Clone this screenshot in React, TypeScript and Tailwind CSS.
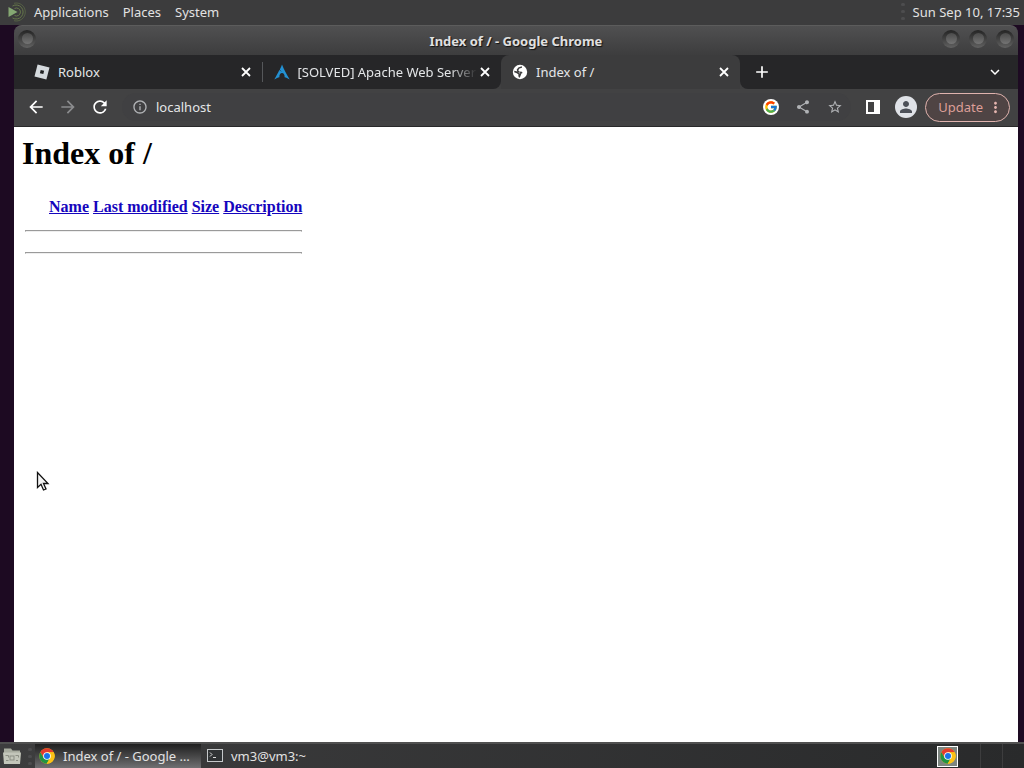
import { FC, ReactNode } from "react";
import clsx from "clsx";
import {
  MdArrowBack,
  MdArrowForward,
  MdInfoOutline,
  MdKeyboardArrowDown,
  MdAdd,
  MdMoreVert,
  MdPerson,
  MdRefresh,
  MdShare,
  MdStarBorder,
} from "react-icons/md";
import { FcGoogle } from "react-icons/fc";

const ChromeLogo: FC<{ className?: string }> = ({ className }) => (
  <svg viewBox="0 0 48 48" className={className} aria-hidden="true">
    <circle cx="24" cy="24" r="23" fill="#fbc116" />
    <path d="M4 12.600A23 23 0 0 1 44 12.600L24 13.500 14.500 29.500Z" fill="#e33b2e" />
    <path d="M4.100 12.500A23 23 0 0 0 23 47L33.500 29.500H14Z" fill="#229342" />
    <path d="M44 12.500H24L33.500 29.500 23 47A23 23 0 0 0 44 12.500Z" fill="#fbc116" />
    <circle cx="24" cy="24" r="11.500" fill="#fff" />
    <circle cx="24" cy="24" r="9" fill="#1a73e8" />
  </svg>
);

const RobloxLogo: FC = () => (
  <svg viewBox="0 0 16 16" className="size-4 shrink-0" aria-hidden="true">
    <path d="M3.600.500 15.500 3.600 12.400 15.500.500 12.400Z" fill="#d5dade" />
    <path d="M6.700 5.900 10.100 6.700 9.300 10.100 5.900 9.300Z" fill="#1f2022" />
  </svg>
);

const ArchLogo: FC = () => (
  <svg viewBox="0 0 16 16" className="size-4 shrink-0" aria-hidden="true">
    <path
      d="M8 .5C7.200 2.500 6.700 3.800 5.800 5.700c.6.6 1.300 1.300 2.400 2C7 7.200 6 6.600 5.300 6 4 8.800 2.600 11.700.3 15.500c2-1.200 3.600-1.900 5.100-2.200C5.200 10.800 6.300 9 8 9s2.800 1.800 2.600 4.300c1.500.3 3.100 1 5.100 2.200C12.300 9.700 10 5.500 8 .5Z"
      fill="#2391d3"
    />
  </svg>
);

const GlobeIcon: FC = () => (
  <svg viewBox="0 0 16 16" className="size-4 shrink-0" aria-hidden="true">
    <circle cx="8" cy="8" r="7.200" fill="#fff" />
    <path
      d="M9.800 2.300 10 3.800 7.400 4.600 6.300 6.300 7.200 7.400 9.900 7.700 10.600 9 9.400 9.600 8.300 12.600 7.200 14 6.300 11.900 6.500 10.600 4.800 9.300 2.200 8.300 2.400 6.800 5.500 7.600 7.600 9.500 8.500 8.900 5.400 7.700 4.700 5.700 6.300 3.600Z"
      fill="#3c3c3d"
    />
    <path d="M10.500 3.300 13 5.500 11.500 6.500 9.500 5.700Z" fill="#fff" />
  </svg>
);

const CloseIcon: FC = () => (
  <svg viewBox="0 0 16 16" className="size-4" aria-hidden="true">
    <path d="M4 4 12 12M12 4 4 12" fill="none" stroke="currentColor" strokeWidth="1.800" />
  </svg>
);

const MenuLogo: FC = () => (
  <svg viewBox="0 0 20 20" className="h-5 w-5 shrink-0" aria-hidden="true">
    <g fill="none" stroke="#66784a" strokeWidth="1">
      <path d="M7.500 6.500A4 4 0 1 1 7.500 13.500" />
      <path d="M5.500 4A7 7 0 1 1 5.500 16" />
      <path d="M7 1.300A9 9 0 1 1 7 18.700" opacity=".6" />
    </g>
    <path d="M1.500 5 10.500 10 1.500 15Z" fill="#85a873" />
  </svg>
);

const TitleButton: FC<{ label: string }> = ({ label }) => (
  <button
    type="button"
    aria-label={label}
    className="flex size-[18px] items-center justify-center rounded-full bg-linear-to-b from-[#242424] to-[#626262]"
  >
    <span className="size-[11px] rounded-full bg-linear-to-b from-[#4b4b4b] to-[#747474]" />
  </button>
);

const Grip: FC = () => (
  <span className="flex w-1 shrink-0 flex-col gap-1" aria-hidden="true">
    <span className="h-[3px] rounded-full bg-[#4d4d4f]" />
    <span className="h-[3px] rounded-full bg-[#4d4d4f]" />
    <span className="h-[3px] rounded-full bg-[#4d4d4f]" />
  </span>
);

interface TabProps {
  icon: ReactNode;
  title: string;
  active?: boolean;
  faded?: boolean;
}

const Tab: FC<TabProps> = ({ icon, title, active, faded }) => (
  <div
    className={clsx(
      "flex h-full min-w-0 flex-1 items-center pr-2 pl-[11px]",
      active && "rounded-t-lg bg-[#3c3c3d]"
    )}
  >
    {icon}
    <button
      type="button"
      role="tab"
      aria-selected={!!active}
      className={clsx(
        "ml-2 min-w-0 flex-1 overflow-hidden text-left whitespace-nowrap",
        faded && "mask-r-from-85%"
      )}
    >
      {title}
    </button>
    <button type="button" aria-label={`Close ${title}`} className="shrink-0 text-white">
      <CloseIcon />
    </button>
  </div>
);

const IndexPage: FC = () => (
  <main className="flex-1 bg-white p-2 font-['Liberation_Serif',serif] text-base text-black">
    <h1 className="mb-[22px] text-[32px] leading-9 font-bold">Index of /</h1>
    <table className="border-separate border-spacing-[2px] leading-[18px]">
      <thead>
        <tr className="h-6">
          <th className="p-px">
            <span className="block w-5" />
          </th>
          {["Name", "Last modified", "Size", "Description"].map((column) => (
            <th key={column} className="p-px font-bold whitespace-nowrap">
              <a href="#" className="text-[#1505bd] underline">
                {column}
              </a>
            </th>
          ))}
        </tr>
      </thead>
      <tbody>
        <tr>
          <td colSpan={5} className="p-px">
            <hr className="my-2 border border-[#9a9a9a] border-b-[#eeeeee]" />
          </td>
        </tr>
        <tr>
          <td colSpan={5} className="p-px">
            <hr className="my-2 border border-[#9a9a9a] border-b-[#eeeeee]" />
          </td>
        </tr>
      </tbody>
    </table>
  </main>
);

const BrowserWindow: FC = () => (
  <section className="mr-[6px] ml-[14px] flex min-h-0 flex-1 flex-col">
    <header className="flex h-[30px] shrink-0 items-center rounded-t-lg border-t border-[#5c5c5c] bg-linear-to-b from-[#505051] to-[#3d3d3e] px-1">
      <div className="flex flex-1 pb-1">
        <TitleButton label="Window menu" />
      </div>
      <h2 className="font-bold text-[#e0e0e0] [text-shadow:1px_1px_1px_#111]">
        Index of / - Google Chrome
      </h2>
      <div className="flex flex-1 justify-end gap-[9px] pb-1">
        <TitleButton label="Minimize" />
        <TitleButton label="Maximize" />
        <TitleButton label="Close window" />
      </div>
    </header>

    <div className="flex h-[34px] shrink-0 bg-[#3f3f40] text-[#e4e6e8]">
      <div
        role="tablist"
        className="flex max-w-[726px] min-w-0 flex-[3] bg-[linear-gradient(#262628_50%,#3f3f40_50%)]"
      >
        <div className="flex min-w-0 flex-[2] items-center rounded-br-lg bg-[#262628] pl-[9px]">
          <Tab icon={<RobloxLogo />} title="Roblox" />
          <span className="h-5 w-px bg-[#55575a]" />
          <Tab icon={<ArchLogo />} title="[SOLVED] Apache Web Server" faded />
        </div>
        <div className="flex min-w-0 flex-1">
          <Tab icon={<GlobeIcon />} title="Index of /" active />
        </div>
      </div>
      <div className="flex flex-1 items-center justify-between rounded-bl-lg bg-[#262628] pr-[14px] pl-3 text-white">
        <button type="button" aria-label="New tab">
          <MdAdd className="size-5" />
        </button>
        <button type="button" aria-label="Search tabs">
          <MdKeyboardArrowDown className="size-[18px]" />
        </button>
      </div>
    </div>

    <nav className="flex h-[38px] shrink-0 items-center gap-3 border-b border-[#29292a] bg-[#424243] px-3 pb-px text-white">
      <button type="button" aria-label="Back">
        <MdArrowBack className="size-5" />
      </button>
      <button type="button" aria-label="Forward" className="text-[#8b8c8e]">
        <MdArrowForward className="size-5" />
      </button>
      <button type="button" aria-label="Reload">
        <MdRefresh className="size-5" />
      </button>
      <div className="flex h-7 min-w-0 flex-1 items-center gap-4 rounded-full bg-[#404042] pr-2 pl-[10px] text-[#b0b2b5]">
        <div className="flex min-w-0 flex-1 items-center gap-2">
          <MdInfoOutline className="size-4 shrink-0" />
          <input
            aria-label="Address"
            defaultValue="localhost"
            className="min-w-0 flex-1 bg-transparent text-[#e4e6e8] outline-none"
          />
        </div>
        <button type="button" aria-label="Google" className="rounded-full bg-white p-px">
          <FcGoogle className="size-[14px]" />
        </button>
        <button type="button" aria-label="Share">
          <MdShare className="size-4" />
        </button>
        <button type="button" aria-label="Bookmark">
          <MdStarBorder className="size-4" />
        </button>
      </div>
      <button type="button" aria-label="Side panel" className="flex size-5 items-center justify-center">
        <span className="h-[14px] w-[14px] border-2 border-r-[6px] border-white" />
      </button>
      <button
        type="button"
        aria-label="Profile"
        className="flex size-[22px] items-center justify-center rounded-full bg-[#dfe2e7] text-[#4c5058]"
      >
        <MdPerson className="size-[18px]" />
      </button>
      <button
        type="button"
        className="-mx-1 flex h-[29px] items-center gap-1 rounded-full border border-[#e0b3ae] bg-[#4f4444] pr-[5px] pl-3 text-[#dd9f98]"
      >
        Update
        <MdMoreVert className="size-[17px] text-[#e5b5af]" />
      </button>
    </nav>

    <IndexPage />
  </section>
);

const Cursor: FC = () => (
  <svg
    viewBox="0 0 14 20"
    className="absolute top-[471px] left-[36px] h-5 w-[14px]"
    aria-hidden="true"
  >
    <path
      d="M1.500 1.500V16.500L5 13.300 7.500 19 10 18 7.500 12.500H12Z"
      fill="#f4f4f4"
      stroke="#111"
      strokeWidth="1.300"
    />
  </svg>
);

const App: FC = () => (
  <div className="relative flex h-screen flex-col overflow-hidden bg-[#1d0a22] font-['Noto_Sans',sans-serif] text-[13px] leading-[18px] text-[#e2e2e2]">
    <header className="flex h-[25px] shrink-0 items-center justify-between bg-[#3c3c3d] pr-1 pb-[2px] pl-[7px]">
      <div className="flex items-center">
        <MenuLogo />
        <nav className="flex gap-[14px] pl-[7px]">
          <button type="button">Applications</button>
          <button type="button">Places</button>
          <button type="button">System</button>
        </nav>
      </div>
      <div className="flex items-center gap-2">
        <Grip />
        <time>Sun Sep 10, 17:35</time>
      </div>
    </header>

    <BrowserWindow />

    <footer className="flex h-[26px] shrink-0 items-center border-t-2 border-[#505050] bg-linear-to-r from-[#3d3d3e] to-[#292a2b]">
      <button type="button" aria-label="Show files" className="px-[2px]">
        <svg viewBox="0 0 20 18" className="h-[18px] w-5" aria-hidden="true">
          <path d="M2 1.500h7l1.500 2H18v13H2Z" fill="#a9ada0" />
          <path d="M1 5.500h18l-1 11.500H2Z" fill="#c3c6ba" />
          <g fill="none" stroke="#8b8e83">
            <rect x="8" y="9" width="4" height="4" />
            <path d="M3.500 8.500h3v2M13.500 8.500h3v2M4 13.500h2.500M14 13.500h2" />
          </g>
        </svg>
      </button>
      <span className="pl-1">
        <Grip />
      </span>
      <button
        type="button"
        className="ml-[3px] flex h-full w-[166px] items-center gap-2 bg-linear-to-b from-[#202020] to-[#707072] px-1"
      >
        <ChromeLogo className="size-4 shrink-0" />
        <span>Index of / - Google …</span>
      </button>
      <button type="button" className="flex h-full items-center gap-2 px-[6px]">
        <svg viewBox="0 0 16 14" className="h-[14px] w-4" aria-hidden="true">
          <rect x=".5" y=".5" width="15" height="12" fill="#303335" stroke="#c5c8ca" />
          <path d="M3 3.500 5 5.500 3 7.500M6 8.500h3" fill="none" stroke="#ddd" />
        </svg>
        vm3@vm3:~
      </button>
      <div className="ml-auto flex h-full items-center">
        <button
          type="button"
          aria-label="Workspace 1"
          className="flex size-[21px] items-center justify-center border border-white bg-[#7d8580]"
        >
          <ChromeLogo className="size-4" />
        </button>
        <button type="button" aria-label="Workspace 2" className="h-full w-[23px] border-r border-[#3d3d3e]" />
        <button type="button" aria-label="Workspace 3" className="h-full w-[22px] border-r border-[#3d3d3e]" />
        <button type="button" aria-label="Workspace 4" className="h-full w-[21px]" />
      </div>
    </footer>

    <Cursor />
  </div>
);

export default App;
